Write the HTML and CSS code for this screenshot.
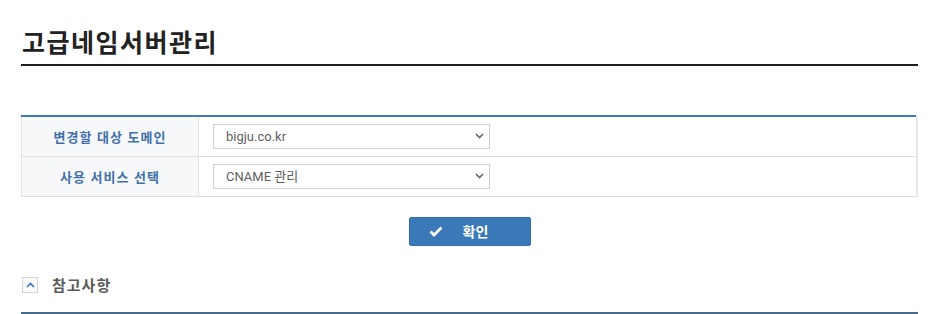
FILE: index.html
```html
<!DOCTYPE html>
<html lang="ko">
  <head>
    <meta charset="UTF-8" />
    <title>고급네임서버관리</title>
    <link rel="stylesheet" href="styles.css">
  </head>
  <body>
    <div class="content">
      <h2 class="page-title">고급네임서버관리</h2>

      <form class="form-ns" action="#" method="POST">
        <table class="form-table">
          <tr>
            <th>변경할 대상 도메인</th>
            <td>
              <select class="form-select">
                <option>bigju.co.kr</option>
              </select>
            </td>
          </tr>
          <tr>
            <th>사용 서비스 선택</th>
            <td>
              <select class="form-select">
                <option>CNAME 관리</option>
              </select>
            </td>
          </tr>
        </table>

        <div class="btn-area">
          <button class="btn-ok" type="submit">
            <svg class="btn-ok__icon" width="14" height="11" viewBox="0 0 14 11">
              <path d="M1.5 5.5 L5 9 L12.5 1.5" fill="none" stroke="#fff" stroke-width="2.8" stroke-linejoin="miter" />
            </svg>
            <span>확인</span>
          </button>
        </div>
      </form>

      <!-- 참고사항 -->
      <div class="notice">
        <div class="notice__head">
          <span class="notice__toggle">
            <svg width="9" height="6" viewBox="0 0 9 6">
              <path d="M1 5 L4.5 1.5 L8 5" fill="none" stroke="#3a78b7" stroke-width="1.6" />
            </svg>
          </span>
          <span class="notice__title">참고사항</span>
        </div>
      </div>
    </div>
  </body>
</html>
```

FILE: styles.css
```css
body {
  margin: 0;
  background-color: #ffffff;
  font-family: "Noto Sans CJK KR", "Noto Sans", sans-serif;
  color: #333333;
}

* {
  box-sizing: border-box;
}

.content {
  width: 897px;
  margin-left: 21px;
}

.page-title {
  margin: 0;
  padding: 24px 0 6px 1px;
  font-size: 25px;
  line-height: 34px;
  font-weight: 700;
  letter-spacing: 1.5px;
  color: #222222;
  border-bottom: 2px solid #1e1e1e;
}

.form-table {
  width: 100%;
  margin-top: 49px;
  border-collapse: collapse;
  border-top: 2px solid #3a7bbf;
  border-left: 1px solid #e4e4e4;
  border-right: 2px solid #e8e8e8;
}

.form-table tr {
  border-bottom: 1px solid #dddddd;
}

.form-table th {
  width: 177px;
  height: 40px;
  padding: 0;
  background-color: #f7f8fa;
  border-right: 1px solid #e2e2e2;
  color: #3f70a8;
  font-size: 13px;
  font-weight: 700;
  letter-spacing: 1px;
  text-align: center;
}

.form-table td {
  padding: 0 14px;
  height: 40px;
}

.form-select {
  display: block;
  width: 277px;
  height: 25px;
  padding: 0 6px 0 12px;
  border: 1px solid #d0d0d0;
  background: #ffffff url("data:image/svg+xml,%3Csvg xmlns='http://www.w3.org/2000/svg' width='9' height='6' viewBox='0 0 9 6'%3E%3Cpath d='M1 1 L4.5 4.5 L8 1' fill='none' stroke='%23666' stroke-width='1.6'/%3E%3C/svg%3E") no-repeat right 5px center;
  appearance: none;
  -webkit-appearance: none;
  color: #5f5f5f;
  font-family: Roboto, "Noto Sans CJK KR", sans-serif;
  font-size: 13px;
  outline: none;
}

.btn-area {
  display: flex;
  justify-content: center;
  margin-top: 20px;
}

.btn-ok {
  display: flex;
  align-items: center;
  width: 122px;
  height: 29px;
  padding: 0 0 0 19px;
  background-color: #3a78b7;
  border: 1px solid #3570ad;
  border-radius: 2px;
  color: #ffffff;
  font-family: "Noto Sans CJK KR", sans-serif;
  font-size: 14px;
  font-weight: 700;
  cursor: pointer;
}

.btn-ok__icon {
  margin-right: 20px;
}

.notice {
  margin-top: 31px;
  border-bottom: 2px solid #4a6a8a;
  padding-bottom: 19px;
}

.notice__head {
  display: flex;
  align-items: center;
}

.notice__toggle {
  display: flex;
  align-items: center;
  justify-content: center;
  width: 16px;
  height: 16px;
  margin-left: 1px;
  margin-right: 14px;
  border: 1px solid #d4d4d4;
  background-color: #fafafa;
}

.notice__title {
  color: #5a5a5a;
  font-size: 15px;
  font-weight: 700;
  line-height: 16px;
  letter-spacing: 1px;
}
```
